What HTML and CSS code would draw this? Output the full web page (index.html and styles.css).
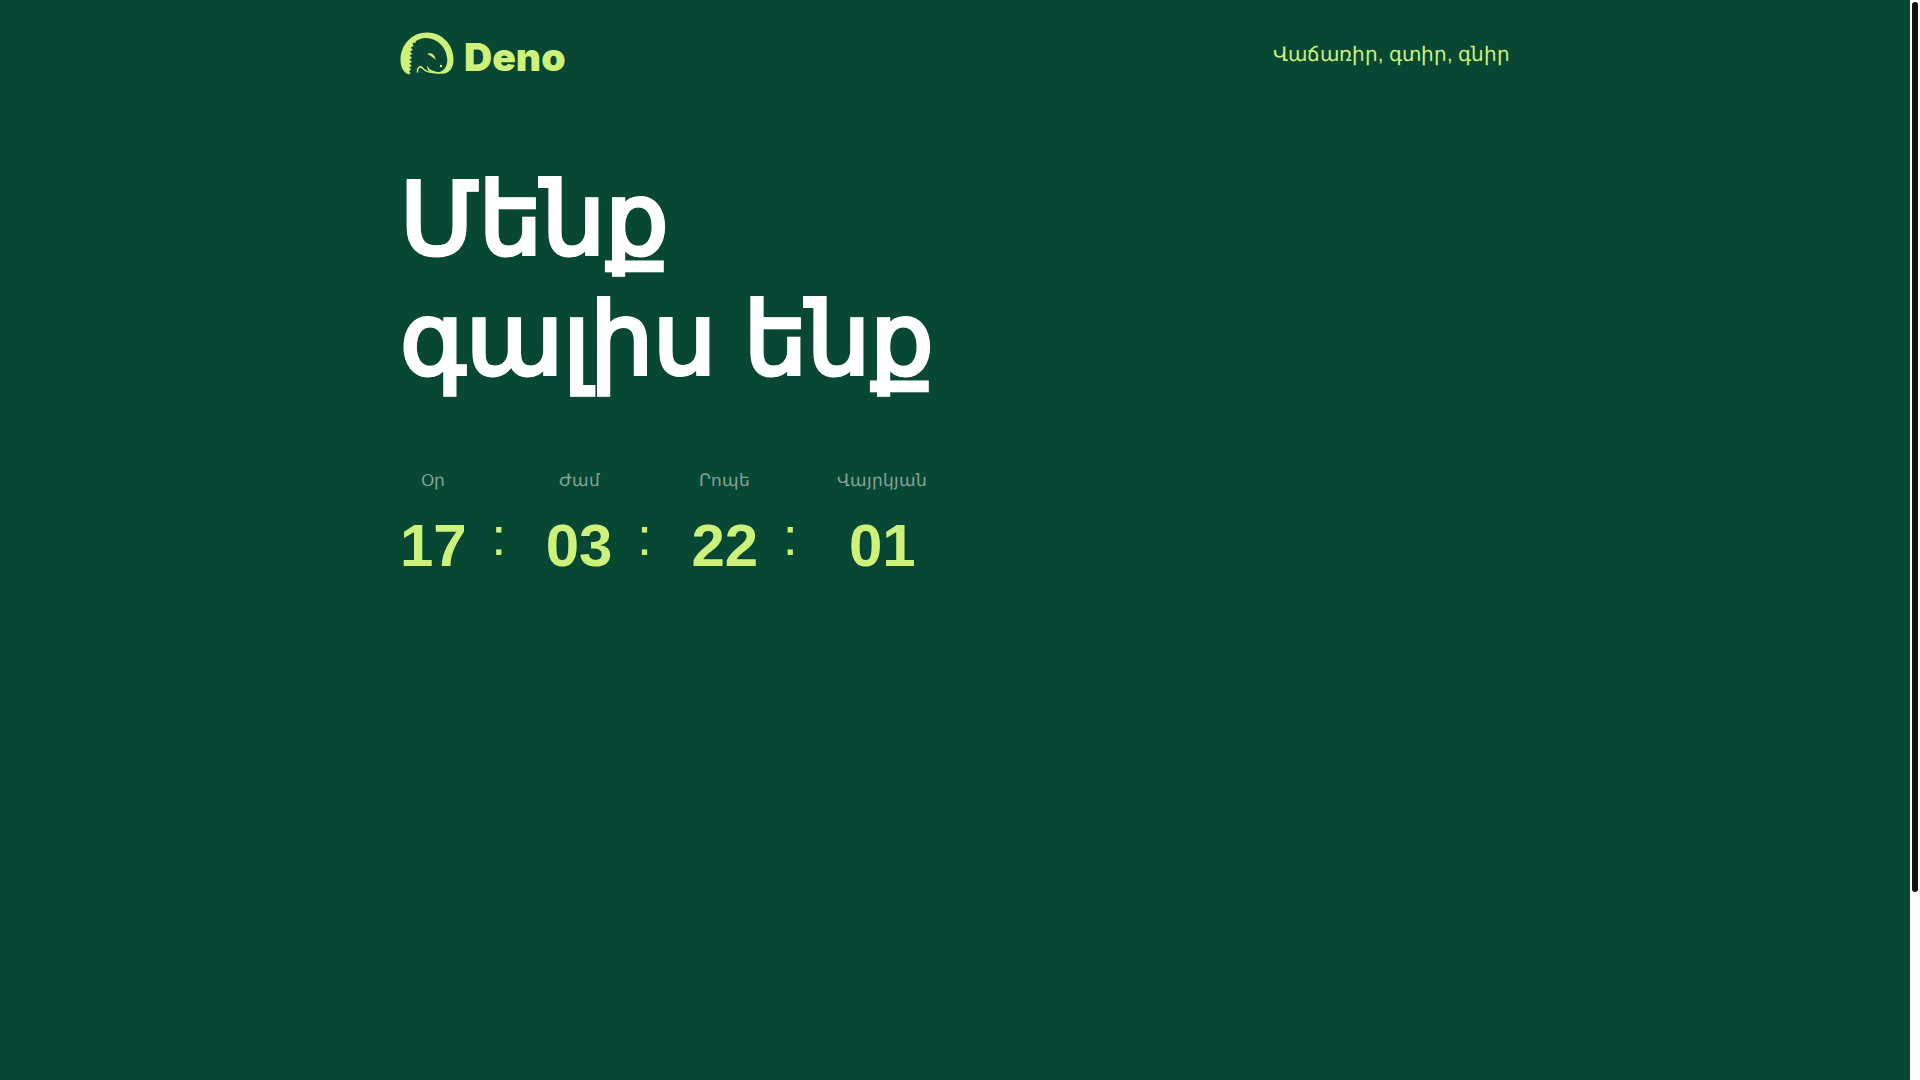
FILE: index.html
```html
<!DOCTYPE html>
<html lang="hy">
<head>
    <meta charset="UTF-8">
    <meta name="viewport" content="width=device-width, initial-scale=1">
    <title>Deno</title>
    <link rel="stylesheet" href="styles.css">
</head>
<body>
    <div class="page">
        <div class="container">
            <header class="header">
                <a href="#" class="logo">
                    <svg class="logo-mark" viewBox="0 0 54 43" aria-hidden="true">
                        <path fill="currentColor" fill-rule="evenodd" d="M9 42.500 C4 41 0.500 35.500 0.500 28 C0.500 12.500 12 0.500 27 0.500 C42 0.500 53.500 12.500 53.500 27.500 C53.500 35.500 50 40.500 44 41.500 C38.500 42.300 32 41.500 29.500 39.500 C27.500 38 26.800 35.500 27.500 33.500 C28.500 36.500 30.500 38.500 34 39 C37 40.500 40 40.500 42.500 38.500 C45.500 36.500 47.500 33 47.200 27 C46.500 15 37.500 6.500 26 6 C21 6 17.500 8 15.500 9.500 L16.200 10.500 L12.500 11 L13.500 14 L10.800 15.500 L12.800 18 L10 19.500 L12.300 22 L9.700 23.500 L12 26 L9.500 27.500 L12 30 L9.300 31.500 L11.800 34 L9.300 35.500 L11.300 37.500 L9 39 L10.500 41 Z"/>
                        <path fill="none" stroke="currentColor" stroke-width="1.500" stroke-linecap="round" d="M17.500 40 C17 35.500 20 33.500 22.500 36 C25 38.500 27 40.500 33 40.500"/>
                        <path fill="currentColor" d="M27 22 C31 20 35.500 23 35.500 28 C33 25 31 24 27 22 Z"/>
                        <circle cx="41" cy="34" r="1.200" fill="currentColor"/>
                    </svg>
                    <span class="logo-text">Deno</span>
                </a>
                <p class="slogan">Վաճառիր, գտիր, գնիր</p>
            </header>

            <main class="main">
                <h1 class="title">Մենք<br>գալիս ենք</h1>

                <div class="countdown">
                    <div class="unit">
                        <span class="unit-label">Օր</span>
                        <span class="unit-value">17</span>
                    </div>
                    <span class="colon">:</span>
                    <div class="unit">
                        <span class="unit-label">Ժամ</span>
                        <span class="unit-value">03</span>
                    </div>
                    <span class="colon">:</span>
                    <div class="unit">
                        <span class="unit-label">Րոպե</span>
                        <span class="unit-value">22</span>
                    </div>
                    <span class="colon">:</span>
                    <div class="unit">
                        <span class="unit-label">Վայրկյան</span>
                        <span class="unit-value">01</span>
                    </div>
                </div>
            </main>
        </div>
    </div>
    <div class="scrollbar" aria-hidden="true">
        <div class="scrollbar-thumb"></div>
    </div>
</body>
</html>
```

FILE: styles.css
```css
* {
    box-sizing: border-box;
    margin: 0;
    padding: 0;
}
body {
    display: flex;
    height: 100vh;
    background: #084734;
    color: #fff;
    font-family: "Liberation Sans", sans-serif;
}
.page {
    flex: 1;
    overflow-y: auto;
    scrollbar-width: none;
}
.scrollbar {
    width: 10px;
    padding: 2px;
    background: #fff;
}
.scrollbar-thumb {
    height: calc(83% - 3px);
    background: #111;
    border-radius: 3px;
}
.container {
    max-width: 1140px;
    margin: 0 auto;
    padding: 0 15px;
}
.header {
    display: flex;
    align-items: center;
    justify-content: space-between;
    padding-top: 32px;
    color: #cef17b;
}
.logo {
    display: flex;
    align-items: flex-end;
    gap: 10px;
    color: inherit;
    text-decoration: none;
}
.logo-mark {
    width: 54px;
    height: 43px;
}
.logo-text {
    font-family: Inter, sans-serif;
    font-size: 39px;
    font-weight: 900;
    line-height: 36px;
}
.slogan {
    font-size: 20px;
    line-height: 26px;
}
.main {
    padding-top: 84px;
}
.title {
    font-size: 100px;
    font-weight: 700;
    line-height: 120px;
    -webkit-text-stroke: 1px #fff;
}
.countdown {
    display: flex;
    align-items: flex-end;
    margin-top: 70px;
}
.unit {
    display: flex;
    flex-direction: column;
    align-items: center;
    gap: 17px;
}
.unit-label {
    color: rgba(255, 255, 255, 0.5);
    font-size: 17px;
    line-height: 24px;
}
.unit-value {
    color: #cef17b;
    font-size: 60px;
    font-weight: 700;
    line-height: 72px;
}
.colon {
    width: 64px;
    margin-right: 15px;
    color: #cef17b;
    font-size: 54px;
    line-height: 92px;
    text-align: center;
}
```
